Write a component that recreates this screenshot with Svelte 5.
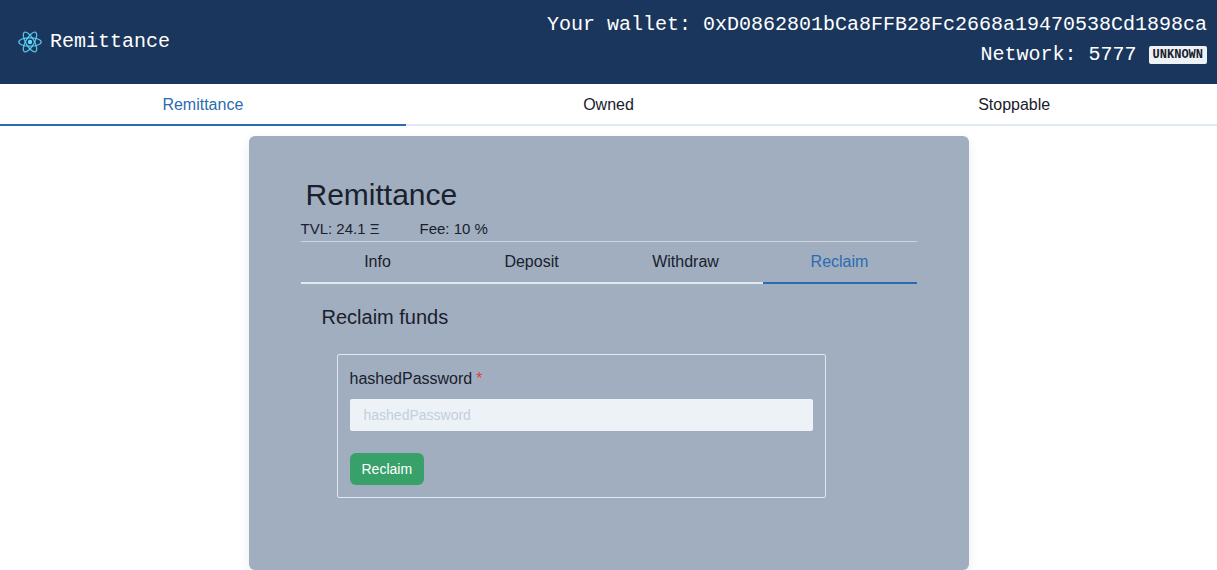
<script>
  const wallet = '0xD0862801bCa8FFB28Fc2668a19470538Cd1898ca';
  const networkId = 5777;
  const contracts = ['Remittance', 'Owned', 'Stoppable'];
  const actions = ['Info', 'Deposit', 'Withdraw', 'Reclaim'];

  let contract = $state('Remittance');
  let action = $state('Reclaim');
  let hashedPassword = $state('');
</script>

<header>
  <div class="brand">
    <svg viewBox="0 0 24 24" width="24" height="24" aria-hidden="true">
      <circle cx="12" cy="12" r="2.2" fill="#61dafb" />
      <g fill="none" stroke="#61dafb" stroke-width="1.25" stroke-opacity="0.85">
        <ellipse cx="12" cy="12" rx="11.2" ry="4.2" />
        <ellipse cx="12" cy="12" rx="11.2" ry="4.2" transform="rotate(60 12 12)" />
        <ellipse cx="12" cy="12" rx="11.2" ry="4.2" transform="rotate(120 12 12)" />
      </g>
    </svg>
    <span>Remittance</span>
  </div>
  <div class="account">
    <div>Your wallet: {wallet}</div>
    <div>Network: {networkId} <span class="badge">UNKNOWN</span></div>
  </div>
</header>

<nav class="tabs" role="tablist">
  {#each contracts as name}
    <button type="button" role="tab" aria-selected={contract === name} class:active={contract === name} onclick={() => (contract = name)}>{name}</button>
  {/each}
</nav>

<main>
  <h1>Remittance</h1>
  <div class="stats">
    <span>TVL: 24.1 Ξ</span>
    <span>Fee: 10 %</span>
  </div>
  <div class="tabs" role="tablist">
    {#each actions as name}
      <button type="button" role="tab" aria-selected={action === name} class:active={action === name} onclick={() => (action = name)}>{name}</button>
    {/each}
  </div>
  <section>
    <h2>Reclaim funds</h2>
    <form onsubmit={(event) => event.preventDefault()}>
      <label for="hashed-password">hashedPassword<span class="required">*</span></label>
      <input id="hashed-password" type="text" placeholder="hashedPassword" required bind:value={hashedPassword} />
      <button class="submit" type="submit">Reclaim</button>
    </form>
  </section>
</main>

<style>
  :global(body) {
    margin: 0;
    background: #fff;
    color: #1a202c;
    font-family: "Liberation Sans", Arial, sans-serif;
    font-size: 16px;
    line-height: 24px;
  }

  header,
  nav,
  main,
  main * {
    box-sizing: border-box;
  }

  header {
    display: flex;
    align-items: center;
    justify-content: space-between;
    padding: 10px 10px 14px 18px;
    background: #1a365d;
    color: #fff;
    font-family: "Liberation Mono", monospace;
    font-size: 20px;
    line-height: 30px;
  }

  .brand {
    display: flex;
    align-items: center;
    gap: 8px;
    padding-top: 4px;
  }

  .account {
    text-align: right;
  }

  .badge {
    display: inline-block;
    padding: 0 4px;
    border-radius: 2px;
    background: #edf2f7;
    color: #1a202c;
    font-size: 12px;
    font-weight: 700;
    line-height: 18px;
    vertical-align: middle;
  }

  .tabs {
    display: flex;
  }

  .tabs button {
    flex: 1;
    padding: 8px 16px;
    border: 0;
    border-bottom: 2px solid #e2e8f0;
    background: none;
    color: inherit;
    font: inherit;
    cursor: pointer;
  }

  nav.tabs button {
    padding: 9px 16px 7px;
  }

  .tabs button.active {
    border-color: #2b6cb0;
    color: #2b6cb0;
  }

  main {
    max-width: 720px;
    margin: 10px auto 0;
    padding: 36px 52px 72px;
    border-radius: 6px;
    background: #a0aec0;
    box-shadow: 0 4px 12px rgba(0, 0, 0, 0.08);
  }

  h1 {
    margin: 0;
    padding-left: 5px;
    font-size: 30px;
    font-weight: 400;
    line-height: 46px;
  }

  .stats {
    display: flex;
    gap: 40px;
    padding-bottom: 2px;
    border-bottom: 1px solid #cbd5e0;
    font-size: 15px;
    line-height: 21px;
  }

  section {
    padding: 18px 91px 0 21px;
  }

  h2 {
    margin: 0;
    font-size: 20px;
    font-weight: 400;
    line-height: 30px;
  }

  form {
    display: flex;
    flex-direction: column;
    align-items: flex-start;
    margin: 22px 0 0 15px;
    padding: 12px;
    border: 1px solid #e2e8f0;
    border-radius: 2px;
  }

  .required {
    margin-left: 4px;
    color: #e53e3e;
    font-size: 16px;
  }

  input {
    width: 100%;
    height: 32px;
    margin: 8px 0 22px;
    padding: 0 14px;
    border: 0;
    border-radius: 2px;
    background: #edf2f7;
    color: inherit;
    font: inherit;
    font-size: 14px;
  }

  input::placeholder {
    color: #c3cfdd;
    opacity: 1;
  }

  .submit {
    height: 32px;
    padding: 0 12px;
    border: 0;
    border-radius: 6px;
    background: #38a169;
    color: #fff;
    font: inherit;
    font-size: 14px;
    cursor: pointer;
  }
</style>
